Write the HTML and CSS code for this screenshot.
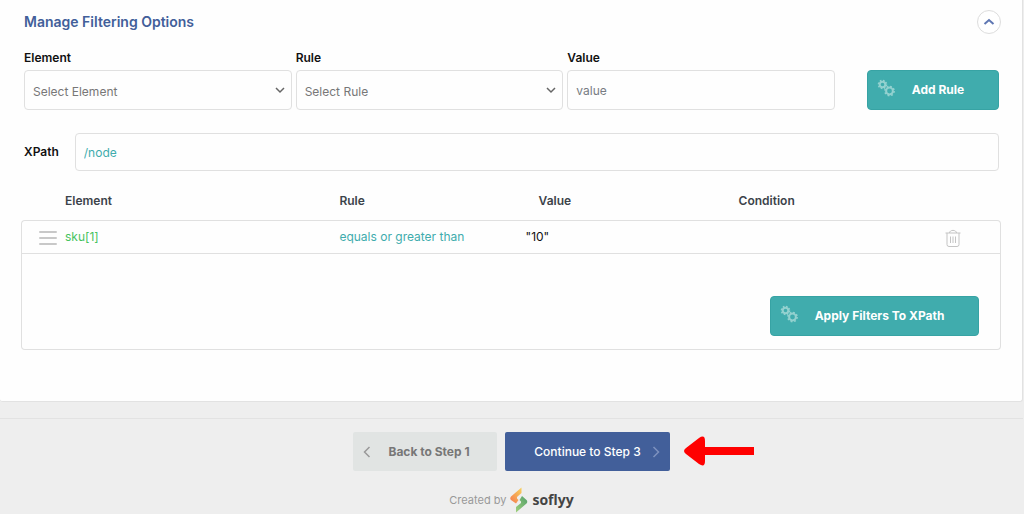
FILE: index.html
```html
<!DOCTYPE html>
<html lang="en">
  <head>
    <meta charset="UTF-8" />
    <meta name="viewport" content="width=device-width, initial-scale=1" />
    <title>Manage Filtering Options</title>
    <link rel="stylesheet" href="styles.css">
  </head>
  <body>
    <svg class="symbols" aria-hidden="true">
      <symbol id="gears" viewBox="0 0 18 18">
        <g fill="none" stroke="currentColor">
          <circle cx="5.5" cy="5.5" r="2.8" stroke-width="2" />
          <circle cx="5.5" cy="5.5" r="4" stroke-width="1.6" stroke-dasharray="1.6 1.54" />
          <circle cx="12.5" cy="12" r="3.4" stroke-width="2" />
          <circle cx="12.5" cy="12" r="4.6" stroke-width="1.6" stroke-dasharray="1.8 1.81" />
        </g>
      </symbol>
    </svg>

    <main class="panel">
      <header class="panel-header">
        <h1>Manage Filtering Options</h1>
        <button type="button" class="collapse" aria-label="Collapse">
          <svg width="12" height="8" viewBox="0 0 12 8"><path d="M1.500 6 6 2l4.500 4" /></svg>
        </button>
      </header>

      <form class="rule-form">
        <div class="field">
          <label for="element">Element</label>
          <select id="element">
            <option>Select Element</option>
          </select>
        </div>
        <div class="field">
          <label for="rule">Rule</label>
          <select id="rule">
            <option>Select Rule</option>
          </select>
        </div>
        <div class="field">
          <label for="value">Value</label>
          <input type="text" id="value" placeholder="value" />
        </div>
        <button type="button" class="btn btn-teal">
          <svg class="gears"><use href="#gears" /></svg>
          <span>Add Rule</span>
        </button>
      </form>

      <div class="xpath">
        <label for="xpath">XPath</label>
        <input type="text" id="xpath" value="/node" />
      </div>

      <table class="rules">
        <colgroup>
          <col class="col-handle" />
          <col class="col-element" />
          <col class="col-rule" />
          <col class="col-value" />
          <col />
          <col class="col-delete" />
        </colgroup>
        <thead>
          <tr>
            <th></th>
            <th>Element</th>
            <th>Rule</th>
            <th class="value-head">Value</th>
            <th>Condition</th>
            <th></th>
          </tr>
        </thead>
        <tbody>
          <tr>
            <td class="handle">
              <svg width="18" height="14" viewBox="0 0 18 14"><path d="M1 1h16M1 7h16M1 13h16" /></svg>
            </td>
            <td class="element">sku[1]</td>
            <td class="rule">equals or greater than</td>
            <td>"10"</td>
            <td></td>
            <td class="delete">
              <button type="button" class="trash" aria-label="Delete rule">
                <svg width="16" height="18" viewBox="0 0 16 18">
                  <path d="M.5 4h15M4.500 4c0-3.500 7-3.500 7 0M2 4v11.500q0 2 2 2h8q2 0 2-2V4M5.500 7.500v6.500M8 7.500v6.500M10.500 7.500v6.500" />
                </svg>
              </button>
            </td>
          </tr>
        </tbody>
        <tfoot>
          <tr>
            <td colspan="6">
              <button type="button" class="btn btn-teal btn-apply">
                <svg class="gears"><use href="#gears" /></svg>
                <span>Apply Filters To XPath</span>
              </button>
            </td>
          </tr>
        </tfoot>
      </table>
    </main>

    <footer class="footer">
      <nav class="steps">
        <button type="button" class="btn btn-back">
          <svg width="8" height="12" viewBox="0 0 8 12"><path d="M6.500 1 1.500 6l5 5" /></svg>
          <span>Back to Step 1</span>
        </button>
        <button type="button" class="btn btn-next">
          <span>Continue to Step 3</span>
          <svg width="8" height="12" viewBox="0 0 8 12"><path d="m1.500 1 5 5-5 5" /></svg>
        </button>
        <svg class="arrow" width="70" height="30" viewBox="0 0 70 30">
          <path d="M2 12 15 2q6-4 6 3v6h49v8H21v6q0 7-6 3L2 18q-4-3 0-6Z" />
        </svg>
      </nav>

      <a href="#" class="credit">
        <span>Created by</span>
        <svg width="18" height="26" viewBox="0 0 18 26">
          <defs>
            <linearGradient id="orange" x1="0" y1="1" x2="1" y2="0">
              <stop offset="0" stop-color="#f5794f" />
              <stop offset="1" stop-color="#f7d25c" />
            </linearGradient>
            <linearGradient id="green" x1="1" y1="0" x2="0" y2="1">
              <stop offset="0" stop-color="#54a06a" />
              <stop offset="1" stop-color="#9fd07c" />
            </linearGradient>
          </defs>
          <path fill="url(#orange)" d="M11.500.5v5.500L7 10v1.500L8.500 13 6 16.500 1 13q-1.500-1.500 0-3.500Z" />
          <path fill="url(#green)" d="m12 9 4.500 4q1.500 1.500 0 3.500L6 25.500V20l5-4v-1.500L9.500 13Z" />
        </svg>
        <strong>soflyy</strong>
      </a>
    </footer>
  </body>
</html>
```
FILE: styles.css
```css
* {
  box-sizing: border-box;
  margin: 0;
  padding: 0;
}

body {
  font-family: 'Inter', sans-serif;
  font-size: 12px;
  line-height: 16px;
  background-color: #eee;
  color: #111;
}

button,
input,
select {
  font: inherit;
}

button {
  cursor: pointer;
}

svg {
  flex: none;
}

.symbols {
  display: none;
}

.panel {
  margin-right: 1px;
  padding: 10px 23px 51px 24px;
  background-color: #fefefe;
  border: solid #e2e2e2;
  border-width: 0 1px 1px 0;
  border-radius: 0 0 3px 3px;
}

.panel-header {
  display: flex;
  align-items: center;
  justify-content: space-between;
  margin-bottom: 16px;
}

h1 {
  font-size: 14px;
  font-weight: 600;
  color: #425f9a;
}

.collapse {
  display: flex;
  align-items: center;
  justify-content: center;
  width: 24px;
  height: 24px;
  margin-right: -2px;
  background: #fff;
  border: 1px solid #ddd;
  border-radius: 50%;
}

.collapse path {
  fill: none;
  stroke: #5f77b3;
  stroke-width: 2;
}

.rule-form {
  display: grid;
  grid-template-columns: repeat(3, 1fr) 160px;
  gap: 4px;
  align-items: end;
}

.rule-form .btn {
  width: 132px;
  justify-self: end;
}

label {
  font-weight: 600;
}

.field label {
  display: block;
  margin-bottom: 4px;
}

select,
input {
  width: 100%;
  height: 40px;
  padding: 0 8px;
  background-color: #fefefe;
  border: 1px solid #e0e0e0;
  border-radius: 4px;
  color: #777;
}

select {
  appearance: none;
  padding-top: 3px;
  background-image: url("data:image/svg+xml,%3Csvg xmlns='http://www.w3.org/2000/svg' width='12' height='8'%3E%3Cpath d='M2 2l4 4 4-4' fill='none' stroke='%23666' stroke-width='1.5'/%3E%3C/svg%3E");
  background-repeat: no-repeat;
  background-position: right 5px center;
}

input::placeholder {
  color: #777c82;
}

.btn {
  display: flex;
  align-items: center;
  height: 40px;
  padding: 0 9px;
  border: 0;
  border-radius: 4px;
  font-weight: 700;
  color: #fff;
}

.btn span {
  flex: 1;
  text-align: center;
}

.btn-teal {
  padding-right: 17px;
  background-color: #40acad;
  border: 1px solid #37a3a4;
}

.gears {
  width: 18px;
  height: 18px;
  margin-bottom: 4px;
  color: #93d1cf;
}

.xpath {
  display: flex;
  align-items: center;
  gap: 16px;
  margin-top: 23px;
}

.xpath input {
  flex: 1;
  height: 38px;
  color: #40acad;
}

.rules {
  width: calc(100% + 5px);
  margin: 11px -2px 0 -3px;
  table-layout: fixed;
  border-spacing: 0;
}

.col-handle {
  width: 44px;
}

.col-element {
  width: 28%;
}

.col-rule {
  width: 19%;
}

.col-value {
  width: 213px;
}

.col-delete {
  width: 96px;
}

.rules th {
  height: 38px;
  text-align: left;
  font-weight: 600;
  color: #3c434a;
}

.rules .value-head {
  padding-left: 13px;
}

.rules td {
  border: 0 solid #e0e0e0;
}

tbody td {
  height: 34px;
}

.rules tbody td {
  border-width: 1px 0;
}

.rules tbody td:first-child {
  border-left-width: 1px;
  border-top-left-radius: 4px;
}

.rules tbody td:last-child {
  border-right-width: 1px;
  border-top-right-radius: 4px;
}

.rules tfoot td {
  padding: 42px 21px 13px;
  border-width: 0 1px 1px;
  border-radius: 0 0 4px 4px;
}

.handle svg {
  display: block;
  margin: 2px auto 0 17px;
}

.handle path {
  stroke: #c8c8c8;
  stroke-width: 2;
  stroke-linecap: round;
}

.element {
  color: #46c35f;
}

.rule {
  color: #40acad;
}

.trash {
  display: block;
  margin: 2px auto 0;
  background: none;
  border: 0;
}

.trash svg {
  display: block;
}

.trash path {
  fill: none;
  stroke: #c4c4c4;
}

.btn-apply {
  width: 209px;
  margin-left: auto;
}

.footer {
  margin: 16px 1px 0 0;
  padding-top: 13px;
  border-top: 1px solid #e2e2e2;
}

.steps {
  position: relative;
  display: flex;
  justify-content: center;
  gap: 8px;
  width: max-content;
  margin: 0 auto;
}

.btn-back,
.btn-next {
  height: 39px;
  border-radius: 2px;
}

.btn-back {
  width: 144px;
  padding: 0 10px;
  background-color: #e1e4e3;
  color: #777;
}

.btn-next {
  width: 165px;
  padding: 0 10px 0 18px;
  background-color: #425f9a;
  font-weight: 500;
}

.steps .btn path {
  fill: none;
  stroke: #999;
  stroke-width: 1.5;
}

.steps .btn-next path {
  stroke: #7d92bf;
}

/* pointer laid over the footer, beside the next button */
.arrow {
  position: absolute;
  left: calc(100% + 14px);
  top: 4px;
  fill: #f00;
}

.credit {
  display: flex;
  align-items: center;
  justify-content: center;
  gap: 4px;
  margin-top: 16px;
  font-size: 11px;
  color: #999;
  text-decoration: none;
}

.credit strong {
  font-family: 'Open Sans', sans-serif;
  font-size: 14px;
  font-weight: 700;
  color: #444;
}
```
